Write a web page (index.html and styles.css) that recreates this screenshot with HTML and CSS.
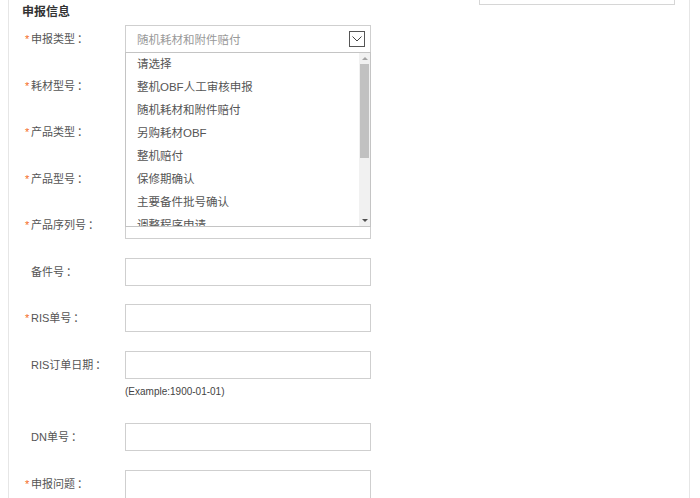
FILE: index.html
```html
<!DOCTYPE html>
<html lang="zh-CN">
<head>
<meta charset="utf-8">
<title>申报信息</title>
<link rel="stylesheet" href="styles.css">
</head>
<body>
<div class="page">
  <div class="prev"><div class="prev-box"></div></div>
  <h3 class="title">申报信息</h3>
  <div class="form">
    <div class="row">
      <label class="lbl"><span class="star">*</span>申报类型<span class="colon">：</span></label>
      <div class="field">
        <div class="input select">
          <span class="sel-text">随机耗材和附件赔付</span>
          <span class="sel-btn"><svg width="10" height="6" viewBox="0 0 10 6"><path d="M0.5 0.5 L5 5 L9.5 0.5" fill="none" stroke="#444" stroke-width="1"/></svg></span>
        </div>
        <div class="dropdown">
          <div class="opts">
            <div class="opt">请选择</div>
            <div class="opt">整机OBF人工审核申报</div>
            <div class="opt">随机耗材和附件赔付</div>
            <div class="opt">另购耗材OBF</div>
            <div class="opt">整机赔付</div>
            <div class="opt">保修期确认</div>
            <div class="opt">主要备件批号确认</div>
            <div class="opt">调整程序申请</div>
          </div>
          <div class="sbar">
            <div class="sb-btn"><span class="tri-up"></span></div>
            <div class="sb-track"><div class="sb-thumb"></div></div>
            <div class="sb-btn"><span class="tri-down"></span></div>
          </div>
        </div>
      </div>
    </div>
    <div class="row">
      <label class="lbl"><span class="star">*</span>耗材型号<span class="colon">：</span></label>
      <div class="field"><div class="input"></div></div>
    </div>
    <div class="row">
      <label class="lbl"><span class="star">*</span>产品类型<span class="colon">：</span></label>
      <div class="field"><div class="input"></div></div>
    </div>
    <div class="row">
      <label class="lbl"><span class="star">*</span>产品型号<span class="colon">：</span></label>
      <div class="field"><div class="input"></div></div>
    </div>
    <div class="row">
      <label class="lbl"><span class="star">*</span>产品序列号<span class="colon">：</span></label>
      <div class="field"><div class="input"></div></div>
    </div>
    <div class="row">
      <label class="lbl">备件号<span class="colon">：</span></label>
      <div class="field"><div class="input"></div></div>
    </div>
    <div class="row">
      <label class="lbl"><span class="star">*</span>RIS单号<span class="colon">：</span></label>
      <div class="field"><div class="input"></div></div>
    </div>
    <div class="row">
      <label class="lbl">RIS订单日期<span class="colon">：</span></label>
      <div class="field">
        <div class="input"></div>
        <div class="hint">(Example:1900-01-01)</div>
      </div>
    </div>
    <div class="row">
      <label class="lbl">DN单号<span class="colon">：</span></label>
      <div class="field"><div class="input"></div></div>
    </div>
    <div class="row">
      <label class="lbl"><span class="star">*</span>申报问题<span class="colon">：</span></label>
      <div class="field"><div class="input tall"></div></div>
    </div>
  </div>
</div>
</body>
</html>
```

FILE: styles.css
```css
html, body {
  margin: 0;
  padding: 0;
  background: #fff;
}

body {
  font-family: "Liberation Sans", "Noto Sans CJK SC", sans-serif;
  color: #555;
}

.page {
  margin-left: 8px;
  width: 680px;
  height: 498px;
  border-left: 1px solid #e6e6e6;
  border-right: 1px solid #e6e6e6;
  overflow: hidden;
}

.prev {
  height: 5px;
  display: flex;
  justify-content: flex-end;
  padding-right: 14px;
}

.prev-box {
  width: 196px;
  height: 5px;
  box-sizing: border-box;
  border: 1px solid #d6d6d6;
  border-top: none;
}

.title {
  margin: 0 0 5px;
  padding-left: 13px;
  font-size: 12px;
  font-weight: bold;
  line-height: 15px;
  color: #333;
}

.form {
  padding-left: 13px;
}

.row {
  display: flex;
  align-items: flex-start;
  margin-bottom: 18.5px;
}

.lbl {
  width: 94px;
  height: 28px;
  padding-left: 9px;
  font-size: 11px;
  line-height: 28px;
  color: #555;
  white-space: nowrap;
  overflow: visible;
}

.colon {
  margin-left: 2px;
}

.star {
  display: inline-block;
  width: 6px;
  margin-left: -6px;
  color: #f56c1d;
  line-height: 1;
  vertical-align: 0;
}

.field {
  position: relative;
  width: 246px;
}

.input {
  height: 28px;
  box-sizing: border-box;
  border: 1px solid #cfcfcf;
  background: #fff;
}

.input.tall {
  height: 60px;
}

.select {
  display: flex;
  align-items: center;
  justify-content: space-between;
  padding: 0 5px 0 11px;
}

.sel-text {
  font-size: 11.5px;
  color: #999;
}

.sel-btn {
  width: 16px;
  height: 16px;
  box-sizing: border-box;
  border: 1px solid #555;
  display: flex;
  align-items: center;
  justify-content: center;
}

.hint {
  margin: 5.5px 0 4.5px;
  font-size: 10px;
  line-height: 16px;
  color: #444;
}

.dropdown {
  position: absolute;
  top: 27px;
  left: 0;
  width: 246px;
  height: 175px;
  box-sizing: border-box;
  border: 1px solid #c4c4c4;
  background: #fff;
  display: flex;
  z-index: 5;
}

.opts {
  flex: 1;
  overflow: hidden;
}

.opt {
  height: 23px;
  line-height: 23px;
  padding-left: 11px;
  font-size: 11.5px;
  color: #555;
  white-space: nowrap;
}

.sbar {
  width: 11px;
  background: #f1f1f1;
  display: flex;
  flex-direction: column;
}

.sb-btn {
  height: 11px;
  display: flex;
  align-items: center;
  justify-content: center;
}

.tri-up {
  width: 0;
  height: 0;
  border-left: 3px solid transparent;
  border-right: 3px solid transparent;
  border-bottom: 3px solid #a3a3a3;
}

.tri-down {
  width: 0;
  height: 0;
  border-left: 3px solid transparent;
  border-right: 3px solid transparent;
  border-top: 3px solid #505050;
}

.sb-track {
  flex: 1;
  padding: 0 1px;
}

.sb-thumb {
  height: 94px;
  background: #c1c1c1;
}
```
